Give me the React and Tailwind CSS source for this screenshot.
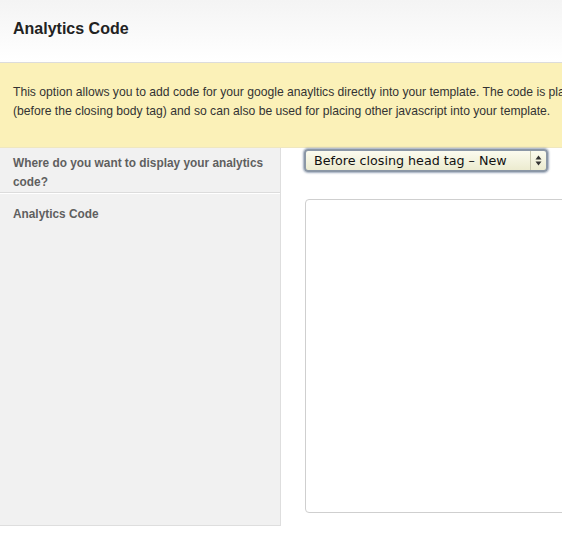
import React from 'react';

const App = () => {
  return (
    <div className="w-[562px] h-[553px] overflow-hidden bg-white font-['Liberation_Sans',Arial,sans-serif]">
      <div className="w-[760px]">
        {/* Header */}
        <div className="h-[63px] bg-gradient-to-b from-[#f4f4f4] to-white border-b border-[#dcdcdc] px-[13px] flex items-center">
          <h1 className="text-[16px] font-bold text-[#222] -mt-[5px]">Analytics Code</h1>
        </div>

        {/* Notice */}
        <div className="h-[85px] bg-[#fbf1b8] border-b border-[#efe7c0] px-[13px] pt-[20px]">
          <p className="text-[12.15px] leading-[19px] text-[#333] whitespace-nowrap">
            This option allows you to add code for your google anayltics directly into your template. The code is placed
            <br />
            (before the closing body tag) and so can also be used for placing other javascript into your template.
          </p>
        </div>

        {/* Form */}
        <div className="flex">
          <div className="w-[281px] shrink-0 bg-[#f1f1f1] border-r border-b border-[#dedede]">
            <div className="h-[45px] pt-[6px] px-[13px] border-b border-[#dcdcdc]">
              <p className="text-[11.85px] leading-[19px] font-bold text-[#5f5f5f]">
                Where do you want to display your analytics code?
              </p>
            </div>
            <div className="h-[332px] pt-[11px] px-[13px] border-t border-white">
              <p className="text-[11.85px] leading-[19px] font-bold text-[#5f5f5f]">Analytics Code</p>
            </div>
          </div>

          <div className="flex-1 pl-[23px] pt-[1px]">
            <div className="w-[244px] h-[23px] rounded-[4px] border-2 border-[#8b97a6] shadow-[0_0_2px_1px_rgba(90,110,140,0.6)] bg-gradient-to-b from-[#fbfbef] to-[#ecebcf] flex items-center">
              <span className="flex-1 pl-[8px] text-[12.7px] text-[#111] font-['DejaVu_Sans',sans-serif] whitespace-nowrap">
                Before closing head tag – New
              </span>
              <span className="w-[16px] h-full border-l border-[#c9c8b0] flex items-center justify-center">
                <svg width="7" height="11" viewBox="0 0 7 11">
                  <path d="M3.5 0.5 L6.5 4.5 L0.5 4.5 Z" fill="#333" />
                  <path d="M3.5 10.5 L6.5 6.5 L0.5 6.5 Z" fill="#333" />
                </svg>
              </span>
            </div>
            <textarea
              className="mt-[27px] ml-[1px] block w-[320px] h-[314px] rounded-[4px] border border-[#cfcfcf] bg-white resize-none outline-none"
              defaultValue=""
            />
          </div>
        </div>
      </div>
    </div>
  );
};

export default App;
